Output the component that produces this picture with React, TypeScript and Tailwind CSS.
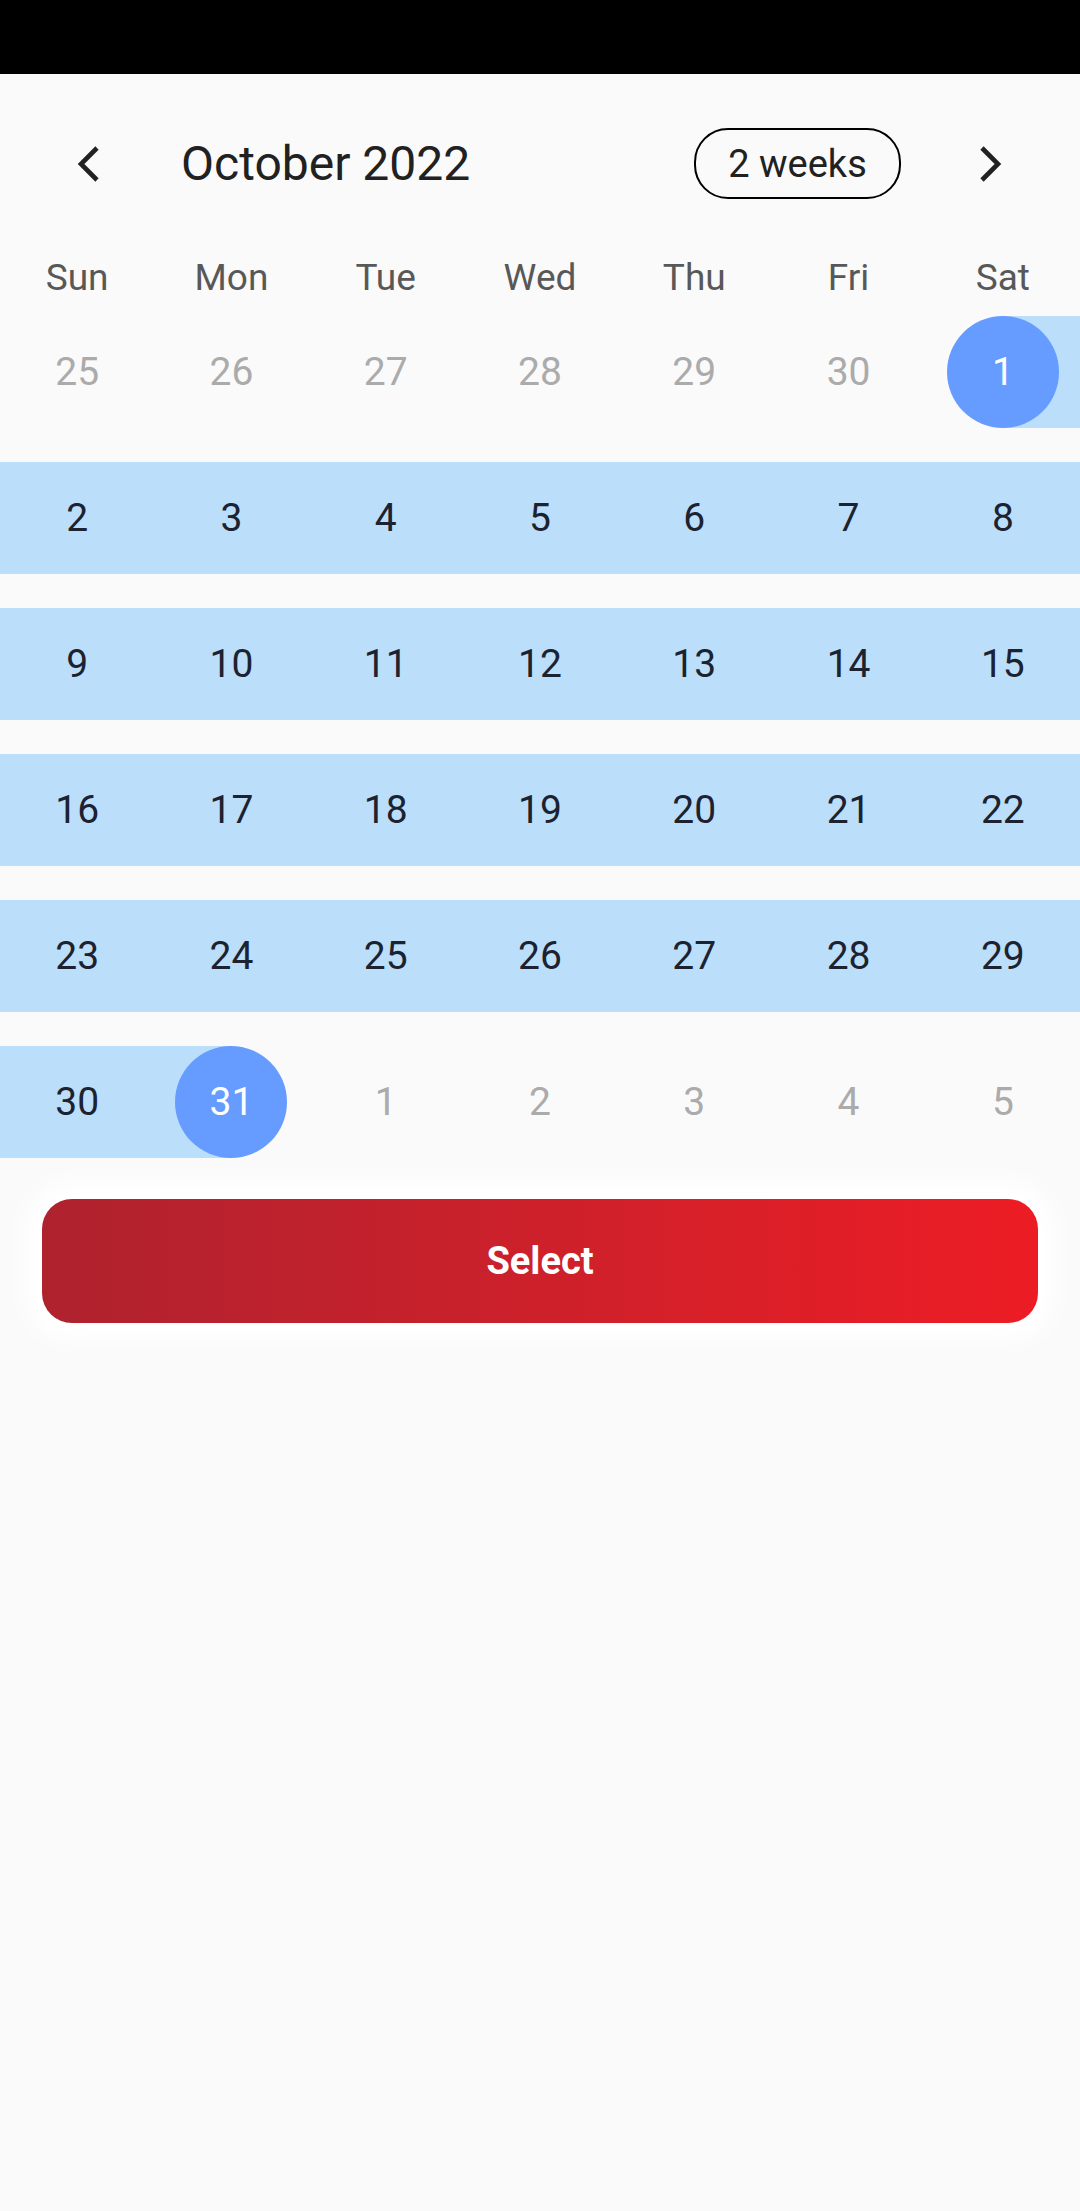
import React from 'react'

type Day = {
  n: number
  kind: 'out' | 'in' | 'start' | 'end'
}

const WEEKDAYS = ['Sun', 'Mon', 'Tue', 'Wed', 'Thu', 'Fri', 'Sat']

const out = (n: number): Day => ({ n, kind: 'out' })
const inside = (n: number): Day => ({ n, kind: 'in' })

const WEEKS: Day[][] = [
  [out(25), out(26), out(27), out(28), out(29), out(30), { n: 1, kind: 'start' }],
  [2, 3, 4, 5, 6, 7, 8].map(inside),
  [9, 10, 11, 12, 13, 14, 15].map(inside),
  [16, 17, 18, 19, 20, 21, 22].map(inside),
  [23, 24, 25, 26, 27, 28, 29].map(inside),
  [inside(30), { n: 31, kind: 'end' }, out(1), out(2), out(3), out(4), out(5)],
]

function Chevron({ dir }: { dir: 'left' | 'right' }) {
  const d = dir === 'left' ? 'M20 2 L4 18 L20 34' : 'M4 2 L20 18 L4 34'
  return (
    <svg width="24" height="36" viewBox="0 0 24 36" fill="none">
      <path d={d} stroke="#212121" strokeWidth="4.6" strokeLinejoin="miter" />
    </svg>
  )
}

function DayCell({ day }: { day: Day }) {
  if (day.kind === 'start' || day.kind === 'end') {
    const band =
      day.kind === 'start'
        ? 'bg-[linear-gradient(to_right,transparent_50%,#bbdefb_50%)]'
        : 'bg-[linear-gradient(to_right,#bbdefb_50%,transparent_50%)]'
    return (
      <div className={`flex h-[112px] items-center justify-center ${band}`}>
        <div className="flex h-[112px] w-[112px] items-center justify-center rounded-full bg-[#669bff] text-[39px] leading-none text-white">
          {day.n}
        </div>
      </div>
    )
  }
  return (
    <div
      className={`flex h-[112px] items-center justify-center text-[39px] leading-none ${
        day.kind === 'in' ? 'bg-[#bbdefb] text-[#1c2230]' : 'text-[#ababab]'
      }`}
    >
      {day.n}
    </div>
  )
}

export default function App() {
  return (
    <div className="min-h-[2211px] bg-[#fafafa] font-['Roboto','Liberation_Sans',sans-serif]">
      <div className="h-[74px] bg-black" />

      {/* header */}
      <div className="mt-[54px] flex h-[71px] items-center">
        <div className="ml-[77px]">
          <Chevron dir="left" />
        </div>
        <h1 className="ml-[80px] text-[48px] leading-none text-[#212121]">October 2022</h1>
        <div className="flex-1" />
        <div className="flex h-[71px] w-[207px] items-center justify-center rounded-[34px] border-[2.5px] border-black text-[38px] leading-none text-[#212121]">
          2 weeks
        </div>
        <div className="ml-[77px] mr-[78px]">
          <Chevron dir="right" />
        </div>
      </div>

      {/* weekday labels */}
      <div className="mt-[53px] grid h-[50px] grid-cols-7 items-center">
        {WEEKDAYS.map((w) => (
          <div key={w} className="text-center text-[37px] leading-none text-[#585858]">
            {w}
          </div>
        ))}
      </div>

      {/* days */}
      <div className="mt-[14px] flex flex-col gap-[34px]">
        {WEEKS.map((week, i) => (
          <div key={i} className="grid grid-cols-7">
            {week.map((d, j) => (
              <DayCell key={j} day={d} />
            ))}
          </div>
        ))}
      </div>

      <div className="mx-[42px] mt-[41px]">
        <button className="flex h-[124px] w-full items-center justify-center rounded-[30px] bg-gradient-to-r from-[#ae222e] to-[#ed1c24] text-[38px] font-bold leading-none text-white shadow-[0_0_26px_18px_#ffffff]">
          Select
        </button>
      </div>
    </div>
  )
}
